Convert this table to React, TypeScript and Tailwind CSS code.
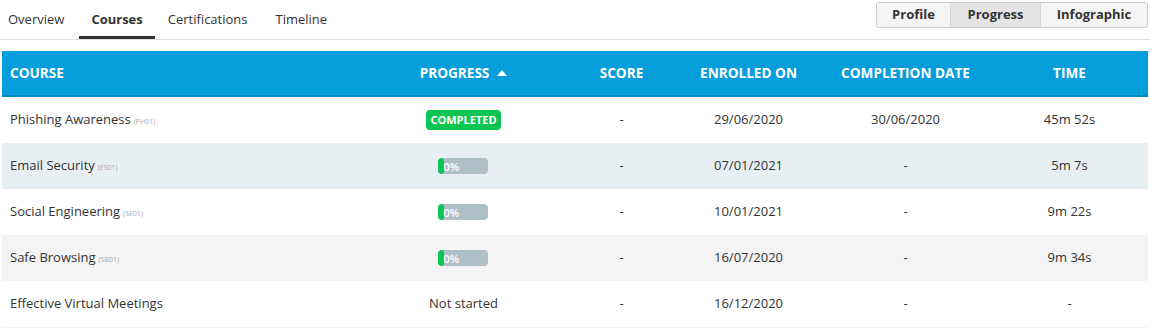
type Course = {
  name: string;
  code?: string;
  progress: "completed" | "not-started" | number;
  score: string;
  enrolled: string;
  completed: string;
  time: string;
  bg: string;
};

const COURSES: Course[] = [
  { name: "Phishing Awareness", code: "(PH01)", progress: "completed", score: "-", enrolled: "29/06/2020", completed: "30/06/2020", time: "45m 52s", bg: "bg-white" },
  { name: "Email Security", code: "(ES01)", progress: 0, score: "-", enrolled: "07/01/2021", completed: "-", time: "5m 7s", bg: "bg-[#e8eff2]" },
  { name: "Social Engineering", code: "(SE01)", progress: 0, score: "-", enrolled: "10/01/2021", completed: "-", time: "9m 22s", bg: "bg-white" },
  { name: "Safe Browsing", code: "(SB01)", progress: 0, score: "-", enrolled: "16/07/2020", completed: "-", time: "9m 34s", bg: "bg-[#f4f4f4]" },
  { name: "Effective Virtual Meetings", progress: "not-started", score: "-", enrolled: "16/12/2020", completed: "-", time: "-", bg: "bg-white" },
];

const TABS = ["Overview", "Courses", "Certifications", "Timeline"];

// column widths measured off the header centres
const GRID = "grid grid-cols-[359px_205px_111px_143px_171px_157px]";

const ProgressCell = ({ value }: { value: Course["progress"] }) => {
  if (value === "completed") {
    return (
      <span className="rounded-[4px] bg-[#0cc552] px-[4px] h-[20px] leading-[20px] text-[11px] font-bold text-white">
        COMPLETED
      </span>
    );
  }
  if (value === "not-started") {
    return <span>Not started</span>;
  }
  return (
    <div className="h-[16px] w-[50px] rounded-[4px] bg-[#b0bec5] overflow-hidden flex items-center -translate-x-[1px]">
      <div className="h-full w-[6px] rounded-[4px] bg-[#0cc552]" />
      <span className="text-[11px] font-semibold text-white leading-none">{value}%</span>
    </div>
  );
};

export default function App() {
  return (
    <div className="w-[1150px] h-[328px] bg-white text-[#333] text-[13px] font-['Open_Sans',sans-serif] overflow-hidden">
      <div className="flex items-center justify-between h-[40px] border-b border-[#dedede]">
        <div className="flex h-full">
          {TABS.map((tab, i) => (
            <div
              key={tab}
              className={
                "h-full flex items-center " +
                (i === 0 ? "pl-[8px] pr-[15px] " : i === 2 ? "pl-[13px] pr-[16px] " : "px-3 ") +
                (tab === "Courses" ? "font-bold border-b-[3px] border-[#333] pt-[3px]" : "")
              }
            >
              {tab}
            </div>
          ))}
        </div>
        <div className="flex self-start mt-[2px] mr-[2px] h-[26px] rounded-[3px] border border-[#c8c8c8] overflow-hidden font-bold">
          <button className="w-[74px] bg-[#f5f5f5] border-r border-[#d6d6d6]">Profile</button>
          <button className="w-[90px] bg-[#e4e4e4] border-r border-[#d6d6d6]">Progress</button>
          <button className="w-[106px] bg-[#f5f5f5]">Infographic</button>
        </div>
      </div>

      <div className="mt-[11px] ml-[2px] w-[1146px]">
        <div className={GRID + " h-[46px] bg-[#069ddb] border-b-[2px] border-[#0389c2] text-white text-[13.6px] font-bold items-center pt-[1px]"}>
          <div className="pl-[8px]">COURSE</div>
          <div className="flex items-center justify-center gap-[8px]">
            PROGRESS
            <svg width="10" height="6" viewBox="0 0 10 6"><path d="M0 6 L5 0 L10 6 Z" fill="white" /></svg>
          </div>
          <div className="text-center">SCORE</div>
          <div className="text-center">ENROLLED ON</div>
          <div className="text-center">COMPLETION DATE</div>
          <div className="text-center">TIME</div>
        </div>
        {COURSES.map((c) => (
          <div key={c.name} className={GRID + " h-[46px] items-center " + c.bg}>
            <div className="pl-[8px]">
              {c.name}
              {c.code && <span className="ml-[3px] text-[7px] text-[#aaa]">{c.code}</span>}
            </div>
            <div className="flex justify-center">
              <ProgressCell value={c.progress} />
            </div>
            <div className="text-center">{c.score}</div>
            <div className="text-center">{c.enrolled}</div>
            <div className="text-center">{c.completed}</div>
            <div className="text-center">{c.time}</div>
          </div>
        ))}
        <div className="h-[6px] bg-[#f4f4f4]" />
      </div>
    </div>
  );
}
